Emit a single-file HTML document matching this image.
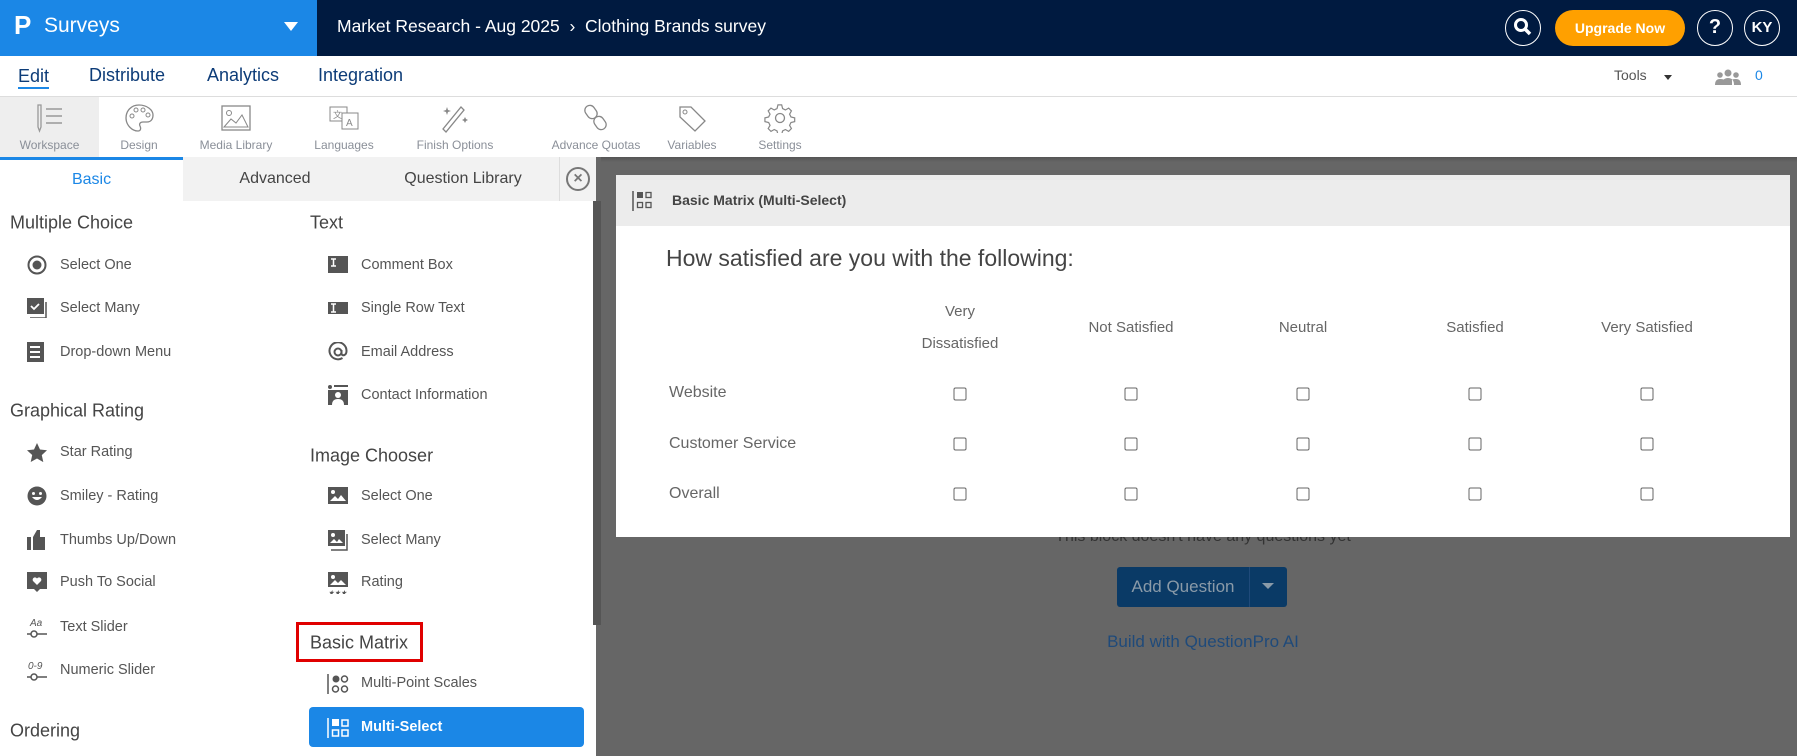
<!DOCTYPE html>
<html><head><meta charset="utf-8"><style>
*{box-sizing:border-box;margin:0;padding:0}
body{width:1797px;height:756px;overflow:hidden;font-family:"Liberation Sans",sans-serif;background:#666;position:relative}
.a{position:absolute;white-space:nowrap}
.hdr{left:0;top:0;width:1797px;height:56px;background:#001a40}
.blue{left:0;top:0;width:317px;height:56px;background:#1b87e6}
.nav{left:0;top:56px;width:1797px;height:41px;background:#fff;border-bottom:1px solid #ddd}
.nav span{position:absolute;top:9px;font-size:18px;color:#0d3c78}
.tb{left:0;top:97px;width:1797px;height:60px;background:#fff}
.ti{position:absolute;top:0;height:60px;text-align:center;font-size:12px;color:#8a8f98}
.ti svg{display:block;margin:6px auto 5px}
.lp{left:0;top:157px;width:596px;height:599px;background:#fff}
.tab{position:absolute;top:0;height:44px;line-height:44px;text-align:center;font-size:16px;color:#444;background:#f2f2f2}
.h{position:absolute;font-size:18px;color:#444;transform:translateY(-50%)}
.it{position:absolute;font-size:14.5px;color:#555;transform:translateY(-50%);display:flex;align-items:center}
.it i{display:inline-block;width:22px;height:20px;margin-right:12px;position:relative}
.card{left:616px;top:175px;width:1174px;height:362px;background:#fff}
.ch{position:absolute;font-size:15px;color:#666;text-align:center;width:160px;transform:translate(-50%,-50%);line-height:32px}
.rl{position:absolute;left:53px;font-size:16px;color:#666;transform:translateY(-50%)}
.cb{position:absolute;width:13px;height:13px;border:1px solid #666;border-radius:2px;transform:translate(-50%,-50%)}
</style></head><body>
<div class="a hdr"></div>
<div class="a blue"></div>
<div class="a" style="left:14px;top:10px;font-size:26px;font-weight:bold;color:#fff">P</div>
<div class="a" style="left:44px;top:14px;font-size:21px;color:#fff">Surveys</div>
<div class="a" style="left:284px;top:22px;width:0;height:0;border-left:7px solid transparent;border-right:7px solid transparent;border-top:9px solid #fff"></div>
<div class="a" style="left:337px;top:16px;font-size:17.5px;color:#fff">Market Research - Aug 2025 &nbsp;›&nbsp; Clothing Brands survey</div>
<div class="a" style="left:1505px;top:10px;width:36px;height:36px;border:1.5px solid #fff;border-radius:50%"><svg width="33" height="33" viewBox="0 0 33 33"><circle cx="15" cy="14" r="5.5" stroke="#fff" stroke-width="3" fill="none"/><path d="M19 18l5 5" stroke="#fff" stroke-width="3.5"/></svg></div>
<div class="a" style="left:1555px;top:10px;width:130px;height:36px;background:#ffa000;border-radius:18px;color:#fff;font-size:14px;font-weight:bold;text-align:center;line-height:36px">Upgrade Now</div>
<div class="a" style="left:1697px;top:10px;width:36px;height:36px;border:1.5px solid #fff;border-radius:50%;color:#fff;font-weight:bold;font-size:20px;text-align:center;line-height:33px">?</div>
<div class="a" style="left:1744px;top:10px;width:36px;height:36px;border:1.5px solid #fff;border-radius:50%;color:#fff;font-weight:bold;font-size:15px;text-align:center;line-height:33px">KY</div>

<div class="a nav">
<span style="left:18px;border-bottom:2px solid #1b87e6;line-height:22px">Edit</span>
<span style="left:89px">Distribute</span><span style="left:207px">Analytics</span><span style="left:318px">Integration</span>
<span style="left:1614px;font-size:14px;color:#555;top:11px">Tools</span>
<span style="left:1664px;top:19px;width:0;height:0;border-left:4.5px solid transparent;border-right:4.5px solid transparent;border-top:5px solid #333"></span>
<svg style="position:absolute;left:1714px;top:12px" width="28" height="18" viewBox="0 0 28 18"><circle cx="14" cy="5" r="3.5" fill="#999"/><circle cx="6" cy="7" r="2.8" fill="#999"/><circle cx="22" cy="7" r="2.8" fill="#999"/><path d="M8 17q0-7 6-7t6 7zM1 17q0-6 5-6t4 2v4zM27 17q0-6-5-6t-4 2v4z" fill="#999"/></svg>
<span style="left:1755px;top:11px;font-size:14px;color:#1b87e6">0</span>
</div>

<div class="a tb">
<div class="ti" style="left:0;width:99px;background:#eee"><svg width="32" height="30" viewBox="0 0 32 30"><path d="M4 2v22l1.5 4 1.5-4V2z" stroke="#999" fill="none" stroke-width="1.3"/><path d="M12 6h16M12 13h16M12 20h16" stroke="#999" stroke-width="1.5"/></svg>Workspace</div>
<div class="ti" style="left:99px;width:80px"><svg width="32" height="30" viewBox="0 0 32 30"><path d="M16 2C8 2 3 8 3 15s6 13 12 13c3 0 3-3 2-5s0-4 3-4h4c4 0 6-3 6-7C30 7 24 2 16 2z" stroke="#888" fill="none" stroke-width="1.3"/><circle cx="9" cy="13" r="2" stroke="#888" fill="none"/><circle cx="13" cy="7" r="2" stroke="#888" fill="none"/><circle cx="20" cy="7" r="2" stroke="#888" fill="none"/><circle cx="25" cy="12" r="2" stroke="#888" fill="none"/></svg>Design</div>
<div class="ti" style="left:186px;width:100px"><svg width="32" height="30" viewBox="0 0 32 30"><rect x="2" y="3" width="28" height="24" stroke="#888" fill="none" stroke-width="1.3"/><circle cx="9" cy="10" r="2.5" stroke="#888" fill="none"/><path d="M4 24l7-8 5 4 6-8 6 12z" stroke="#888" fill="none"/></svg>Media Library</div>
<div class="ti" style="left:294px;width:100px"><svg width="32" height="30" viewBox="0 0 32 30"><rect x="2" y="4" width="17" height="14" stroke="#888" fill="none"/><rect x="14" y="10" width="16" height="16" stroke="#888" fill="#fff"/><text x="5" y="15" font-size="9" fill="#888">文</text><text x="18" y="23" font-size="10" fill="#888">A</text></svg>Languages</div>
<div class="ti" style="left:400px;width:110px"><svg width="32" height="30" viewBox="0 0 32 30"><path d="M4 26l18-22 3 3L7 29z" stroke="#888" fill="none" stroke-width="1.3"/><path d="M8 4l1 3 3 1-3 1-1 3-1-3-3-1 3-1zM26 14l1 2 2 1-2 1-1 2-1-2-2-1 2-1z" fill="#888"/></svg>Finish Options</div>
<div class="ti" style="left:536px;width:120px"><svg width="32" height="30" viewBox="0 0 32 30"><rect x="6" y="2" width="10" height="14" rx="5" transform="rotate(-35 11 9)" stroke="#888" fill="none" stroke-width="1.3"/><rect x="15" y="13" width="10" height="14" rx="5" transform="rotate(-35 20 20)" stroke="#888" fill="none" stroke-width="1.3"/></svg>Advance Quotas</div>
<div class="ti" style="left:652px;width:80px"><svg width="32" height="30" viewBox="0 0 32 30"><path d="M4 4h11l14 14-10 10L4 14z" stroke="#888" fill="none" stroke-width="1.3"/><circle cx="9" cy="9" r="2" stroke="#888" fill="none"/></svg>Variables</div>
<div class="ti" style="left:740px;width:80px"><svg width="32" height="30" viewBox="0 0 32 30"><circle cx="16" cy="15" r="4.5" stroke="#888" fill="none" stroke-width="1.3"/><path d="M14 2h4l1 4 3 1.5 3.5-2 3 3-2 3.5 1.5 3 4 1v4l-4 1-1.5 3 2 3.5-3 3-3.5-2-3 1.5-1 4h-4l-1-4-3-1.5-3.5 2-3-3 2-3.5-1.5-3-4-1v-4l4-1 1.5-3-2-3.5 3-3 3.5 2 3-1.5z" stroke="#888" fill="none" stroke-width="1.3" transform="scale(0.93) translate(1 0)"/></svg>Settings</div>
</div>

<div class="a lp">
<div class="tab" style="left:0;width:183px;background:#fff;color:#1b87e6;border-top:3px solid #1b87e6;line-height:40px">Basic</div>
<div class="tab" style="left:183px;width:184px">Advanced</div>
<div class="tab" style="left:367px;width:192px">Question Library</div>
<div class="tab" style="left:559px;width:37px;border-left:1px solid #ddd"><div style="position:absolute;left:6px;top:10px;width:24px;height:24px;border:2px solid #777;border-radius:50%;color:#777;font-size:16px;line-height:19px;font-weight:bold">×</div></div>
<div style="position:absolute;left:593px;top:44px;width:8px;height:424px;background:#555"></div>
</div>
<div class="a" style="left:0;top:157px;width:596px;height:599px">
<div class="h" style="left:10px;top:66px">Multiple Choice</div>
<div class="it" style="left:26px;top:108px"><i><svg width="22" height="20"><circle cx="11" cy="10" r="8.5" stroke="#555" stroke-width="2" fill="none"/><circle cx="11" cy="10" r="4.5" fill="#555"/></svg></i>Select One</div>
<div class="it" style="left:26px;top:151px"><i><svg width="22" height="20"><rect x="1" y="0" width="17" height="16" fill="#555"/><path d="M20 4v16H4" stroke="#555" stroke-width="1.5" fill="none"/><path d="M5 8l3 3 5-5" stroke="#fff" stroke-width="1.8" fill="none"/></svg></i>Select Many</div>
<div class="it" style="left:26px;top:195px"><i><svg width="22" height="20"><rect x="1" y="0" width="17" height="20" fill="#555"/><path d="M4 5h10M4 10h10M4 15h10" stroke="#fff" stroke-width="2"/></svg></i>Drop-down Menu</div>
<div class="h" style="left:10px;top:254px">Graphical Rating</div>
<div class="it" style="left:26px;top:295px"><i><svg width="22" height="20"><path d="M11 1l3 6.5 7 .8-5.2 4.8 1.5 7L11 16.5 4.7 20l1.5-7L1 8.3l7-.8z" fill="#555"/></svg></i>Star Rating</div>
<div class="it" style="left:26px;top:339px"><i><svg width="22" height="20"><circle cx="11" cy="10" r="9.5" fill="#555"/><circle cx="7.5" cy="7.5" r="1.5" fill="#fff"/><circle cx="14.5" cy="7.5" r="1.5" fill="#fff"/><path d="M6 11q5 6 10 0z" fill="#fff"/></svg></i>Smiley - Rating</div>
<div class="it" style="left:26px;top:383px"><i><svg width="22" height="20"><rect x="1" y="7" width="4" height="13" fill="#555"/><path d="M7 7l4-7h3v7h5v13H7z" fill="#555"/></svg></i>Thumbs Up/Down</div>
<div class="it" style="left:26px;top:425px"><i><svg width="22" height="20"><path d="M1 0h20v17h-7l-3 3-3-3H1z" fill="#555"/><path d="M11 13l-4-4a2.3 2.3 0 014-2.5 2.3 2.3 0 014 2.5z" fill="#fff"/></svg></i>Push To Social</div>
<div class="it" style="left:26px;top:470px"><i><svg width="22" height="22"><text x="4" y="9" font-size="10" fill="#555">Aa</text><path d="M1 17h20" stroke="#555" stroke-width="1.5"/><circle cx="8" cy="17" r="3" stroke="#555" stroke-width="1.5" fill="#fff"/></svg></i>Text Slider</div>
<div class="it" style="left:26px;top:513px"><i><svg width="22" height="22"><text x="2" y="9" font-size="10" fill="#555">0-9</text><path d="M1 17h20" stroke="#555" stroke-width="1.5"/><circle cx="8" cy="17" r="3" stroke="#555" stroke-width="1.5" fill="#fff"/></svg></i>Numeric Slider</div>
<div class="h" style="left:10px;top:574px">Ordering</div>

<div class="h" style="left:310px;top:66px">Text</div>
<div class="it" style="left:327px;top:108px"><i><svg width="22" height="20"><rect x="1" y="1" width="20" height="17" fill="#555"/><path d="M4 4h5M6.5 4v7M4 11h5" stroke="#fff" stroke-width="1.5"/></svg></i>Comment Box</div>
<div class="it" style="left:327px;top:151px"><i><svg width="22" height="20"><rect x="1" y="4" width="20" height="12" fill="#555"/><path d="M4 6h5M6.5 6v8M4 14h5" stroke="#fff" stroke-width="1.5"/></svg></i>Single Row Text</div>
<div class="it" style="left:327px;top:195px"><i><svg width="22" height="20"><circle cx="11" cy="10" r="3.5" stroke="#555" stroke-width="2" fill="none"/><path d="M14.5 8v3q0 3 3 2 2-1 2-4a8.5 8.5 0 10-4 7" stroke="#555" stroke-width="2" fill="none"/></svg></i>Email Address</div>
<div class="it" style="left:327px;top:238px"><i><svg width="22" height="20"><circle cx="3" cy="2" r="2" fill="#555"/><path d="M7 1h14" stroke="#555" stroke-width="2"/><rect x="1" y="5" width="20" height="15" fill="#555"/><circle cx="11" cy="10" r="3" fill="#fff"/><path d="M5 20q0-6 6-6t6 6" fill="#fff"/></svg></i>Contact Information</div>
<div class="h" style="left:310px;top:299px">Image Chooser</div>
<div class="it" style="left:327px;top:339px"><i><svg width="22" height="20"><rect x="1" y="1" width="20" height="17" fill="#555"/><circle cx="6" cy="6" r="2" fill="#fff"/><path d="M3 15l5-5 3 3 3-4 5 6z" fill="#fff"/></svg></i>Select One</div>
<div class="it" style="left:327px;top:383px"><i><svg width="22" height="22"><rect x="1" y="0" width="17" height="16" fill="#555"/><circle cx="6" cy="5" r="2" fill="#fff"/><path d="M3 13l4-4 3 3 2-3 4 4z" fill="#fff"/><path d="M20 4v16H4" stroke="#555" stroke-width="1.5" fill="none"/></svg></i>Select Many</div>
<div class="it" style="left:327px;top:425px"><i><svg width="22" height="22"><rect x="1" y="0" width="20" height="15" fill="#555"/><circle cx="6" cy="5" r="2" fill="#fff"/><path d="M3 13l5-5 3 3 3-3 5 5z" fill="#fff"/><text x="1" y="23" font-size="7" fill="#555">★★★</text></svg></i>Rating</div>
<div class="a" style="left:296px;top:465px;width:127px;height:40px;border:3px solid #e00000"></div>
<div class="h" style="left:310px;top:486px">Basic Matrix</div>
<div class="it" style="left:327px;top:526px"><i><svg width="22" height="22"><path d="M1 1v20" stroke="#555" stroke-width="1.5"/><circle cx="9" cy="6" r="3.5" fill="#555"/><circle cx="17.5" cy="6" r="3" stroke="#555" stroke-width="1.5" fill="none"/><circle cx="8.5" cy="16" r="3" stroke="#555" stroke-width="1.5" fill="none"/><circle cx="17.5" cy="16" r="3" stroke="#555" stroke-width="1.5" fill="none"/></svg></i>Multi-Point Scales</div>
<div class="a" style="left:309px;top:550px;width:275px;height:40px;background:#1b87e6;border-radius:4px"></div>
<div class="it" style="left:327px;top:570px;color:#fff;font-weight:bold"><i><svg width="22" height="22"><path d="M1 1v20" stroke="#fff" stroke-width="1.5"/><rect x="5" y="2" width="7" height="7" fill="#fff"/><rect x="15" y="3" width="6" height="6" stroke="#fff" stroke-width="1.5" fill="none"/><rect x="5.5" y="13" width="6" height="6" stroke="#fff" stroke-width="1.5" fill="none"/><rect x="15" y="13" width="6" height="6" stroke="#fff" stroke-width="1.5" fill="none"/></svg></i>Multi-Select</div>
</div>

<div class="a" style="left:601px;top:157px;width:1196px;height:5px;background:linear-gradient(#555,#666)"></div>
<div class="a" style="left:1203px;top:528px;transform:translateX(-50%);font-size:16px;color:#333">This block doesn't have any questions yet</div>
<div class="a" style="left:1117px;top:567px;width:170px;height:40px;background:#0a3a66;border-radius:3px"></div>
<div class="a" style="left:1117px;top:567px;width:133px;height:40px;line-height:40px;text-align:center;color:#8a9aa8;font-size:17px;border-right:1px solid #1f4a7a">Add Question</div>
<div class="a" style="left:1262px;top:583px;width:0;height:0;border-left:6px solid transparent;border-right:6px solid transparent;border-top:6px solid #8a9aa8"></div>
<div class="a" style="left:1203px;top:632px;transform:translateX(-50%);color:#1f4a7a;font-size:17px">Build with QuestionPro AI</div>

<div class="a card">
<div style="position:absolute;left:0;top:0;width:1174px;height:51px;background:#ececec"></div>
<svg style="position:absolute;left:16px;top:15px" width="22" height="22"><path d="M1 1v20" stroke="#555" stroke-width="1.5"/><rect x="5" y="2" width="6" height="6" fill="#555"/><rect x="14" y="2.5" width="5" height="5" stroke="#555" stroke-width="1.3" fill="none"/><rect x="5.5" y="12.5" width="5" height="5" stroke="#555" stroke-width="1.3" fill="none"/><rect x="14" y="12.5" width="5" height="5" stroke="#555" stroke-width="1.3" fill="none"/></svg>
<div class="a" style="left:56px;top:17px;font-size:14px;font-weight:bold;color:#444">Basic Matrix (Multi-Select)</div>
<div class="a" style="left:50px;top:70px;font-size:23px;color:#444">How satisfied are you with the following:</div>
<div class="ch" style="left:344px;top:153px">Very<br>Dissatisfied</div>
<div class="ch" style="left:515px;top:153px">Not Satisfied</div>
<div class="ch" style="left:687px;top:153px">Neutral</div>
<div class="ch" style="left:859px;top:153px">Satisfied</div>
<div class="ch" style="left:1031px;top:153px">Very Satisfied</div>
<div class="rl" style="top:218px">Website</div>
<div class="rl" style="top:269px">Customer Service</div>
<div class="rl" style="top:319px">Overall</div>
<div class="cb" style="left:344px;top:219px"></div><div class="cb" style="left:515px;top:219px"></div><div class="cb" style="left:687px;top:219px"></div><div class="cb" style="left:859px;top:219px"></div><div class="cb" style="left:1031px;top:219px"></div>
<div class="cb" style="left:344px;top:269px"></div><div class="cb" style="left:515px;top:269px"></div><div class="cb" style="left:687px;top:269px"></div><div class="cb" style="left:859px;top:269px"></div><div class="cb" style="left:1031px;top:269px"></div>
<div class="cb" style="left:344px;top:319px"></div><div class="cb" style="left:515px;top:319px"></div><div class="cb" style="left:687px;top:319px"></div><div class="cb" style="left:859px;top:319px"></div><div class="cb" style="left:1031px;top:319px"></div>
</div>
</body></html>
